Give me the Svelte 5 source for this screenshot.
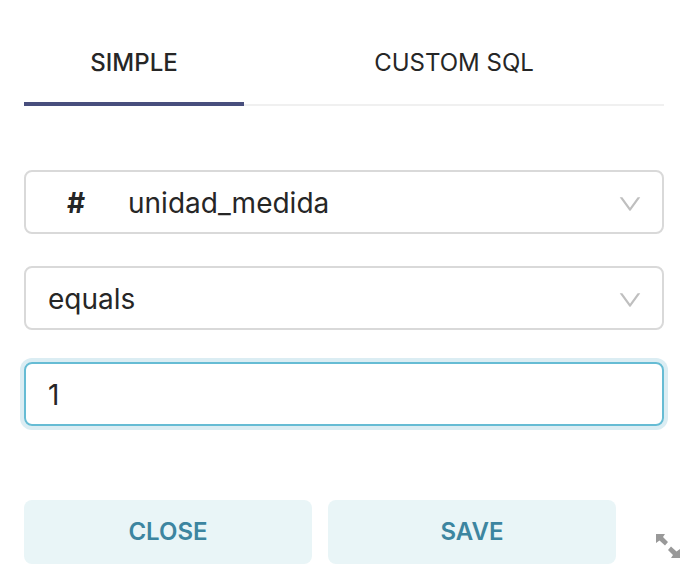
<script>
  let tab = $state('simple');
  let column = $state('unidad_medida');
  let operator = $state('equals');
  let value = $state('1');
</script>

{#snippet arrow()}
  <svg class="arrow" viewBox="64 64 896 896" aria-hidden="true">
    <path d="M884 256h-75c-5.100 0-9.900 2.500-12.900 6.600L512 654.200 227.900 262.600c-3-4.100-7.800-6.600-12.900-6.600h-75c-6.500 0-10.300 7.400-6.500 12.700l352.600 486.100c12.800 17.600 39 17.600 51.700 0l352.600-486.100c3.900-5.300.1-12.700-6.400-12.700z" />
  </svg>
{/snippet}

<form class="editor" onsubmit={(e) => e.preventDefault()}>
  <div class="tabs" role="tablist">
    <button type="button" role="tab" aria-selected={tab === 'simple'} class:active={tab === 'simple'} onclick={() => (tab = 'simple')}>SIMPLE</button>
    <button type="button" role="tab" aria-selected={tab === 'sql'} class:active={tab === 'sql'} onclick={() => (tab = 'sql')}>CUSTOM SQL</button>
  </div>

  <div class="fields">
    <div class="field">
      <span class="type" aria-hidden="true">#</span>
      <select class="with-type" aria-label="Column" bind:value={column}>
        <option>unidad_medida</option>
      </select>
      {@render arrow()}
    </div>
    <div class="field">
      <select aria-label="Operator" bind:value={operator}>
        <option>equals</option>
      </select>
      {@render arrow()}
    </div>
    <div class="field focused">
      <input type="text" aria-label="Filter value" bind:value />
    </div>
  </div>

  <div class="actions">
    <button type="button">CLOSE</button>
    <button type="submit">SAVE</button>
    <svg class="resize" viewBox="0 0 24 24" aria-hidden="true">
      <path d="M0 0H9L7 3L12 8L9 11.500L3.500 6.500L0 9ZM24 24H15L17 21L12 16L15 12.500L20.500 17.500L24 15Z" />
    </svg>
  </div>
</form>

<style>
  :global(body) {
    background: #fff;
  }

  .editor {
    padding: 20px 24px;
    font-family: Inter, "Liberation Sans", sans-serif;
    color: #262626;
  }

  button,
  input,
  select {
    box-sizing: border-box;
    margin: 0;
    border: 0;
    outline: 0;
    background: transparent;
    color: inherit;
    font-family: inherit;
  }

  button {
    font-size: 24px;
    cursor: pointer;
  }

  .tabs {
    display: grid;
    grid-template-columns: 11fr 21fr;
    box-shadow: inset 0 -2px #f0f0f0;
  }

  .tabs button {
    height: 86px;
    padding: 2px 0 0;
    border-bottom: 4px solid transparent;
  }

  .tabs .active {
    border-color: #484e7d;
    font-weight: 500;
  }

  .fields {
    display: grid;
    gap: 32px;
    margin-top: 64px;
  }

  .field {
    box-sizing: border-box;
    display: grid;
    align-items: center;
    height: 64px;
    border: 2px solid #d9d9d9;
    border-radius: 8px;
  }

  .field > * {
    grid-area: 1 / 1;
  }

  .focused {
    border-color: #66bcd4;
    box-shadow: 0 0 0 4px #dbedf3;
  }

  select,
  input {
    width: 100%;
    height: 60px;
    padding: 2px 22px 0;
    font-size: 28px;
    appearance: none;
  }

  select.with-type {
    padding-left: 102px;
  }

  .type {
    padding: 2px 0 0 41px;
    font-size: 28px;
    font-weight: 700;
  }

  .arrow {
    justify-self: end;
    width: 24px;
    height: 24px;
    margin: 4px 20px 0 0;
    fill: #bfbfbf;
    pointer-events: none;
  }

  .actions {
    display: grid;
    grid-template-columns: 1fr 1fr 48px;
    gap: 16px;
    align-items: end;
    margin: 74px -16px 0 0;
  }

  .actions button {
    height: 64px;
    padding: 0 0 2px;
    border-radius: 8px;
    background: #e9f5f7;
    color: #3c85a0;
    font-weight: 600;
  }

  .resize {
    justify-self: end;
    width: 24px;
    height: 24px;
    margin-bottom: 6px;
    fill: #999;
  }
</style>
